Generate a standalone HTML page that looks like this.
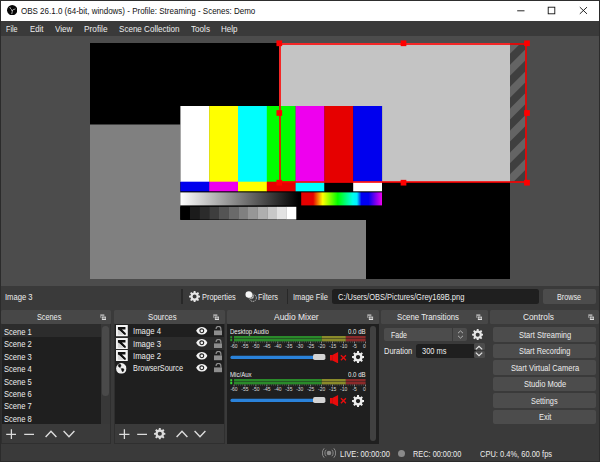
<!DOCTYPE html>
<html><head><meta charset="utf-8"><title>OBS</title>
<style>
html,body{margin:0;padding:0;background:#3a3a3a;}
body{width:600px;height:462px;overflow:hidden;font-family:"Liberation Sans",sans-serif;}
#root{position:relative;width:600px;height:462px;overflow:hidden;background:#3a3a3a;}
#root div,#root svg,#root span{position:absolute;}
.t{white-space:nowrap;transform-origin:0 50%;line-height:14px;height:14px;}
.hdr{background:#474747;border-radius:1.5px;height:14.2px;top:309.7px;}
.list{background:#1f1f1f;}
.btn{background:#4c4c4c;border-radius:2px;}
.sel{background:#2c2c2c;}

</style></head>
<body>
<div id="root">
<svg width="0" height="0" style="left:0;top:0"><defs>
<symbol id="gear" viewBox="-6 -6 12 12"><path fill-rule="evenodd" d="M4.37,-1.08 L5.93,-0.94 L5.93,0.94 L4.37,1.08 L3.86,2.32 L4.85,3.53 L3.53,4.85 L2.32,3.86 L1.08,4.37 L0.94,5.93 L-0.94,5.93 L-1.08,4.37 L-2.32,3.86 L-3.53,4.85 L-4.85,3.53 L-3.86,2.32 L-4.37,1.08 L-5.93,0.94 L-5.93,-0.94 L-4.37,-1.08 L-3.86,-2.32 L-4.85,-3.53 L-3.53,-4.85 L-2.32,-3.86 L-1.08,-4.37 L-0.94,-5.93 L0.94,-5.93 L1.08,-4.37 L2.32,-3.86 L3.53,-4.85 L4.85,-3.53 L3.86,-2.32Z M2.15,0 A2.15,2.15 0 1,0 -2.15,0 A2.15,2.15 0 1,0 2.15,0Z"/></symbol>
<symbol id="eye" viewBox="0 0 12 8"><path d="M0.1,4 C2,0.6 4,0 6,0 C8,0 10,0.6 11.9,4 C10,7.4 8,8 6,8 C4,8 2,7.4 0.1,4Z" fill="#f2f2f2"/><circle cx="6" cy="4" r="2.6" fill="#222"/><circle cx="6" cy="4" r="1.4" fill="#f2f2f2"/></symbol>
<symbol id="lock" viewBox="0 0 9 10"><rect x="0" y="4.6" width="8.6" height="5.2" fill="#8e8e8e"/><path d="M2.2,3.0 V2.9 A2.5,2.5 0 0 1 7.2,2.9 V4.8" fill="none" stroke="#8e8e8e" stroke-width="1.3"/></symbol>
<symbol id="img" viewBox="0 0 11.8 11.4"><rect x="0" y="0" width="11.8" height="11.4" fill="#f4f4f4"/><path d="M1.9,2 H9.4 V4.5 H5.9 L9.7,8.3 V9.7 H8.2 L2.7,4.7 H1.9Z" fill="#101010"/><path d="M1.9,5 L2.5,5 L7.7,9.7 H1.9Z" fill="#d6d6d6"/></symbol>
<symbol id="globe" viewBox="0 0 10.6 10.8"><ellipse cx="5.3" cy="5.4" rx="5.2" ry="5.3" fill="#efefef"/><path d="M2.6,1.6 C3.6,0.9 5.2,1.4 5,2.6 C4.9,3.6 4.2,4.4 3.4,4.2 C2.4,4 2,2.4 2.6,1.6Z M5.6,5.8 C6.6,5.2 8.2,5.8 8,7 C7.8,7.8 7,8.0 6.8,9 C6.2,8.4 5.2,6.8 5.6,5.8Z M3.6,4 L6,6.2" fill="#111" stroke="#111" stroke-width="0.5"/></symbol>
<symbol id="float" viewBox="0 0 7 7"><rect x="0.3" y="0.3" width="4.4" height="3.8" fill="#a8a8a8"/><rect x="1.9" y="2.5" width="4.8" height="4.2" fill="#e2e2e2" stroke="#454545" stroke-width="0.5"/><rect x="2.7" y="3.9" width="3.2" height="1.1" fill="#4a4a4a"/></symbol>
<symbol id="plus" viewBox="0 0 11 11"><path d="M5.5,0.2 V10.8 M0.2,5.5 H10.8" stroke="#dcdcdc" stroke-width="1.3" fill="none"/></symbol>
<symbol id="minus" viewBox="0 0 11 11"><path d="M0.2,5.5 H10.8" stroke="#dcdcdc" stroke-width="1.3" fill="none"/></symbol>
<symbol id="up" viewBox="0 0 12 8"><path d="M0.6,7 L6,1.2 L11.4,7" stroke="#dcdcdc" stroke-width="1.4" fill="none"/></symbol>
<symbol id="down" viewBox="0 0 12 8"><path d="M0.6,1 L6,6.8 L11.4,1" stroke="#dcdcdc" stroke-width="1.4" fill="none"/></symbol>
<symbol id="mute" viewBox="0 0 16.6 11.4"><path d="M0,3.0 H2.4 L8.1,0 V11.4 L2.4,8.5 H0Z" fill="#e80c0c"/><path d="M2.4,3.2 V8.3" stroke="#b00808" stroke-width="0.4"/><path d="M10.9,3.2 L16,8.3 M16,3.2 L10.9,8.3" stroke="#e80c0c" stroke-width="1.4" fill="none"/></symbol>
</defs></svg>
<div style="left:0;top:0;width:600px;height:22px;background:#2e2e2e"></div>
<div style="left:1px;top:1px;width:599px;height:20.4px;background:#fff"></div>
<svg style="left:6.6px;top:4.9px" width="10.4" height="10.4" viewBox="-5.2 -5.2 10.4 10.4"><circle r="5.15" fill="#060606"/>
<g fill="none" stroke="#e8e8e8" stroke-width="0.75" stroke-linecap="round"><path d="M0,0.2 C-0.6,-1.2 -2.0,-1.2 -2.3,-2.7"/><path d="M0,0.2 C0.8,-1.1 1.9,-0.4 2.9,-1.1"/><path d="M0,0.2 C0.6,1.5 -0.4,2.2 -0.4,3.4"/></g></svg>
<svg style="left:510px;top:1px" width="90" height="20" viewBox="510 1 90 20"><g stroke="#111" stroke-width="0.9" fill="none">
<path d="M517.2,10.8 H524.5"/><rect x="548.2" y="7.2" width="6.6" height="6.6"/><path d="M579.8,7.1 L587,13.9 M587,7.1 L579.8,13.9"/></g></svg>
<div style="left:0;top:21.4px;width:600px;height:14.6px;background:#3a3a3a"></div>
<div style="left:0;top:36px;width:600px;height:250px;background:#4c4c4c"></div>
<svg style="left:0;top:36px" width="600" height="250" viewBox="0 36 600 250">
<defs><linearGradient id="gg" x1="0" x2="1"><stop offset="0" stop-color="#fff"/><stop offset="0.04" stop-color="#f4f4f4"/><stop offset="1" stop-color="#000"/></linearGradient>
<linearGradient id="rb" x1="0" x2="1"><stop offset="0" stop-color="#e60000"/><stop offset="0.148" stop-color="#e60000"/><stop offset="0.266" stop-color="#ffff00"/><stop offset="0.453" stop-color="#00ff00"/><stop offset="0.64" stop-color="#00ffee"/><stop offset="0.69" stop-color="#00f0ff"/><stop offset="0.745" stop-color="#0000f0"/><stop offset="0.835" stop-color="#0000f0"/><stop offset="1" stop-color="#ee00ee"/></linearGradient>
<clipPath id="sc"><rect x="510" y="45" width="15.2" height="136"/></clipPath></defs>
<rect x="90" y="43" width="420" height="236" fill="#000"/>
<rect x="90" y="124.5" width="276" height="154.5" fill="#808080"/>
<rect x="279" y="43" width="231" height="139" fill="#c4c4c4"/>
<rect x="510" y="43" width="17" height="139" fill="#3f3f3f"/>
<g clip-path="url(#sc)" fill="#646464">
<polygon points="508,1.1 529,-19.9 529,-8.95 508,12.05"/>
<polygon points="508,23 529,2 529,12.95 508,33.95"/>
<polygon points="508,44.9 529,23.9 529,34.85 508,55.85"/>
<polygon points="508,66.8 529,45.8 529,56.75 508,77.75"/>
<polygon points="508,88.7 529,67.7 529,78.65 508,99.65"/>
<polygon points="508,110.6 529,89.6 529,100.55 508,121.55"/>
<polygon points="508,132.5 529,111.5 529,122.45 508,143.45"/>
<polygon points="508,154.4 529,133.4 529,144.35 508,165.35"/>
<polygon points="508,176.3 529,155.3 529,166.25 508,187.25"/>
<polygon points="508,198.2 529,177.2 529,188.15 508,209.15"/>
</g>
<rect x="180.3" y="106" width="201.8" height="114" fill="#000"/>
<rect x="180.40" y="106" width="29.00" height="76" fill="#ffffff"/>
<rect x="209.20" y="106" width="29.00" height="76" fill="#ffff00"/>
<rect x="238.00" y="106" width="29.00" height="76" fill="#00ffff"/>
<rect x="266.80" y="106" width="29.00" height="76" fill="#00ff00"/>
<rect x="295.60" y="106" width="29.00" height="76" fill="#ee00ee"/>
<rect x="324.40" y="106" width="29.00" height="76" fill="#e60000"/>
<rect x="353.20" y="106" width="28.80" height="76" fill="#0000ee"/>
<rect x="180.40" y="181.7" width="29.00" height="9.6" fill="#0000ee"/>
<rect x="209.20" y="181.7" width="29.00" height="9.6" fill="#ee00ee"/>
<rect x="238.00" y="181.7" width="29.00" height="9.6" fill="#ffff00"/>
<rect x="266.80" y="181.7" width="29.00" height="9.6" fill="#e60000"/>
<rect x="295.60" y="181.7" width="29.00" height="9.6" fill="#00ffff"/>
<rect x="324.40" y="181.7" width="29.00" height="9.6" fill="#000000"/>
<rect x="353.20" y="181.7" width="28.80" height="9.6" fill="#ffffff"/>
<rect x="180.3" y="192.4" width="118" height="13.0" fill="url(#gg)"/>
<rect x="301.2" y="192.4" width="80.8" height="13.0" fill="url(#rb)"/>
<rect x="180.30" y="206.8" width="9.87" height="12.7" fill="rgb(0,0,0)"/>
<rect x="189.97" y="206.8" width="9.87" height="12.7" fill="rgb(27,27,27)"/>
<rect x="199.63" y="206.8" width="9.87" height="12.7" fill="rgb(43,43,43)"/>
<rect x="209.30" y="206.8" width="9.87" height="12.7" fill="rgb(62,62,62)"/>
<rect x="218.97" y="206.8" width="9.87" height="12.7" fill="rgb(84,84,84)"/>
<rect x="228.63" y="206.8" width="9.87" height="12.7" fill="rgb(106,106,106)"/>
<rect x="238.30" y="206.8" width="9.87" height="12.7" fill="rgb(128,128,128)"/>
<rect x="247.97" y="206.8" width="9.87" height="12.7" fill="rgb(151,151,151)"/>
<rect x="257.63" y="206.8" width="9.87" height="12.7" fill="rgb(175,175,175)"/>
<rect x="267.30" y="206.8" width="9.87" height="12.7" fill="rgb(200,200,200)"/>
<rect x="276.97" y="206.8" width="9.87" height="12.7" fill="rgb(226,226,226)"/>
<rect x="286.63" y="206.8" width="9.67" height="12.7" fill="rgb(255,255,255)"/>
<rect x="280" y="44" width="246" height="138" fill="none" stroke="#ff0000" stroke-width="1.6"/>
<rect x="276.45" y="40.45" width="5.7" height="5.7" fill="#ff0000"/>
<rect x="276.45" y="110.15" width="5.7" height="5.7" fill="#ff0000"/>
<rect x="276.45" y="179.85" width="5.7" height="5.7" fill="#ff0000"/>
<rect x="400.65" y="40.45" width="5.7" height="5.7" fill="#ff0000"/>
<rect x="400.65" y="179.85" width="5.7" height="5.7" fill="#ff0000"/>
<rect x="524.15" y="40.45" width="5.7" height="5.7" fill="#ff0000"/>
<rect x="524.15" y="110.15" width="5.7" height="5.7" fill="#ff0000"/>
<rect x="524.15" y="179.85" width="5.7" height="5.7" fill="#ff0000"/>
</svg>
<div style="left:0;top:286px;width:600px;height:24px;background:#3a3a3a"></div>
<div style="left:181.2px;top:288.5px;width:1.6px;height:15px;background:#282828"></div>
<div style="left:286.6px;top:288.5px;width:1.6px;height:15px;background:#282828"></div>
<svg style="left:189.4px;top:291px" width="11.2" height="11.2" fill="#e6e6e6"><use href="#gear"/></svg>
<svg style="left:244.8px;top:290.4px" width="12.4" height="12" viewBox="0 0 12.4 12"><defs><clipPath id="fc"><circle cx="5.7" cy="6.0" r="3.3"/></clipPath></defs>
<circle cx="7.9" cy="7.9" r="3.5" fill="none" stroke="#cfcfcf" stroke-width="0.9" stroke-dasharray="1.3 0.7"/>
<circle cx="5.7" cy="6.0" r="3.4" fill="#3a3a3a"/>
<g clip-path="url(#fc)" stroke="#ececec" stroke-width="0.7"><path d="M2,7.4 L7,2.4 M2.8,8.6 L8.2,3.2 M4,9.6 L9.2,4.4 M5.2,10.6 L10.2,5.6"/><path d="M3.2,3.2 L8.6,8.6 M2,4.4 L7.4,9.8 M4.6,2.2 L9.8,7.4"/></g>
<circle cx="3.8" cy="4.5" r="3.3" fill="#f6f6f6"/></svg>
<div class="list" style="left:332px;top:289px;width:206.6px;height:14.6px;border-radius:2.5px"></div>
<div class="btn" style="left:543px;top:289px;width:52.6px;height:14.6px"></div>
<div class="hdr" style="left:1px;width:110px"></div>
<svg style="left:99.7px;top:313.6px" width="6.5" height="6.5"><use href="#float"/></svg>
<div class="hdr" style="left:114px;width:110.5px"></div>
<svg style="left:212.9px;top:313.6px" width="6.5" height="6.5"><use href="#float"/></svg>
<div class="hdr" style="left:227px;width:152px"></div>
<svg style="left:367.2px;top:313.6px" width="6.5" height="6.5"><use href="#float"/></svg>
<div class="hdr" style="left:381px;width:107px"></div>
<svg style="left:475.9px;top:313.6px" width="6.5" height="6.5"><use href="#float"/></svg>
<div class="hdr" style="left:490px;width:109px"></div>
<svg style="left:587.9px;top:313.6px" width="6.5" height="6.5"><use href="#float"/></svg>
<div class="list" style="left:1px;top:324px;width:109.8px;height:100.4px"></div>
<div class="sel" style="left:1px;top:324px;width:99.5px;height:13px"></div>
<div style="left:100.6px;top:324px;width:9.2px;height:100.4px;background:#383838"></div>
<div style="left:109.8px;top:324px;width:1.2px;height:100.4px;background:#2a2a2a"></div>
<div style="left:102px;top:326px;width:7.3px;height:69.7px;background:#4a4a4a;border-radius:3.6px"></div>
<svg style="left:5.6px;top:428.6px" width="10.8" height="10.8"><use href="#plus"/></svg>
<svg style="left:23.6px;top:428.6px" width="10.8" height="10.8"><use href="#minus"/></svg>
<svg style="left:45px;top:430px" width="12" height="8"><use href="#up"/></svg>
<svg style="left:63px;top:430px" width="12" height="8"><use href="#down"/></svg>
<div class="list" style="left:114px;top:324px;width:110.5px;height:100.4px"></div>
<div class="sel" style="left:114px;top:337.2px;width:110.5px;height:12.4px"></div>
<svg style="left:116.2px;top:325.1px" width="11.9" height="11.5"><use href="#img"/></svg>
<svg style="left:196.3px;top:327.05px" width="11.6" height="7.7"><use href="#eye"/></svg>
<svg style="left:213.6px;top:326.1px" width="8.6" height="9.6"><use href="#lock"/></svg>
<svg style="left:116.2px;top:337.53px" width="11.9" height="11.5"><use href="#img"/></svg>
<svg style="left:196.3px;top:339.48px" width="11.6" height="7.7"><use href="#eye"/></svg>
<svg style="left:213.6px;top:338.53px" width="8.6" height="9.6"><use href="#lock"/></svg>
<svg style="left:116.2px;top:349.96px" width="11.9" height="11.5"><use href="#img"/></svg>
<svg style="left:196.3px;top:351.91px" width="11.6" height="7.7"><use href="#eye"/></svg>
<svg style="left:213.6px;top:350.96px" width="8.6" height="9.6"><use href="#lock"/></svg>
<svg style="left:116.3px;top:362.89px" width="10.6" height="10.8"><use href="#globe"/></svg>
<svg style="left:196.3px;top:364.34px" width="11.6" height="7.7"><use href="#eye"/></svg>
<svg style="left:213.6px;top:363.39px" width="8.6" height="9.6"><use href="#lock"/></svg>
<svg style="left:119px;top:428.6px" width="10.8" height="10.8"><use href="#plus"/></svg>
<svg style="left:136.6px;top:428.6px" width="10.8" height="10.8"><use href="#minus"/></svg>
<svg style="left:154.4px;top:428.3px" width="11.6" height="11.6" fill="#dcdcdc"><use href="#gear"/></svg>
<svg style="left:176.4px;top:430px" width="12" height="8"><use href="#up"/></svg>
<svg style="left:194.4px;top:430px" width="12" height="8"><use href="#down"/></svg>
<div class="list" style="left:227px;top:324px;width:152px;height:119.8px"></div>
<div style="left:369.7px;top:325.8px;width:6.6px;height:115.4px;background:#414141;border-radius:3.3px"></div>
<svg style="left:228px;top:333px" width="142" height="32" viewBox="228 333 142 32">
<rect x="230.3" y="336.2" width="1.9" height="2.2" fill="#2a962a"/><rect x="230.3" y="339" width="1.9" height="2.2" fill="#2a962a"/>
<rect x="234.00" y="336" width="87.73" height="2.5" fill="#2a8a2a"/>
<rect x="234.00" y="338.9" width="87.73" height="2.5" fill="#2a8a2a"/>
<rect x="321.73" y="336" width="24.13" height="2.5" fill="#8a8a2a"/>
<rect x="321.73" y="338.9" width="24.13" height="2.5" fill="#8a8a2a"/>
<rect x="345.86" y="336" width="19.74" height="2.5" fill="#8a2a2a"/>
<rect x="345.86" y="338.9" width="19.74" height="2.5" fill="#8a2a2a"/>
<rect x="233.73" y="341.6" width="0.55" height="1.8" fill="#d8d8d8"/>
<rect x="235.92" y="341.6" width="0.55" height="0.9" fill="#8a8a8a"/>
<rect x="238.12" y="341.6" width="0.55" height="0.9" fill="#8a8a8a"/>
<rect x="240.31" y="341.6" width="0.55" height="0.9" fill="#8a8a8a"/>
<rect x="242.50" y="341.6" width="0.55" height="0.9" fill="#8a8a8a"/>
<rect x="244.70" y="341.6" width="0.55" height="1.8" fill="#d8d8d8"/>
<rect x="246.89" y="341.6" width="0.55" height="0.9" fill="#8a8a8a"/>
<rect x="249.08" y="341.6" width="0.55" height="0.9" fill="#8a8a8a"/>
<rect x="251.28" y="341.6" width="0.55" height="0.9" fill="#8a8a8a"/>
<rect x="253.47" y="341.6" width="0.55" height="0.9" fill="#8a8a8a"/>
<rect x="255.66" y="341.6" width="0.55" height="1.8" fill="#d8d8d8"/>
<rect x="257.86" y="341.6" width="0.55" height="0.9" fill="#8a8a8a"/>
<rect x="260.05" y="341.6" width="0.55" height="0.9" fill="#8a8a8a"/>
<rect x="262.24" y="341.6" width="0.55" height="0.9" fill="#8a8a8a"/>
<rect x="264.44" y="341.6" width="0.55" height="0.9" fill="#8a8a8a"/>
<rect x="266.63" y="341.6" width="0.55" height="1.8" fill="#d8d8d8"/>
<rect x="268.82" y="341.6" width="0.55" height="0.9" fill="#8a8a8a"/>
<rect x="271.02" y="341.6" width="0.55" height="0.9" fill="#8a8a8a"/>
<rect x="273.21" y="341.6" width="0.55" height="0.9" fill="#8a8a8a"/>
<rect x="275.40" y="341.6" width="0.55" height="0.9" fill="#8a8a8a"/>
<rect x="277.60" y="341.6" width="0.55" height="1.8" fill="#d8d8d8"/>
<rect x="279.79" y="341.6" width="0.55" height="0.9" fill="#8a8a8a"/>
<rect x="281.98" y="341.6" width="0.55" height="0.9" fill="#8a8a8a"/>
<rect x="284.18" y="341.6" width="0.55" height="0.9" fill="#8a8a8a"/>
<rect x="286.37" y="341.6" width="0.55" height="0.9" fill="#8a8a8a"/>
<rect x="288.56" y="341.6" width="0.55" height="1.8" fill="#d8d8d8"/>
<rect x="290.76" y="341.6" width="0.55" height="0.9" fill="#8a8a8a"/>
<rect x="292.95" y="341.6" width="0.55" height="0.9" fill="#8a8a8a"/>
<rect x="295.14" y="341.6" width="0.55" height="0.9" fill="#8a8a8a"/>
<rect x="297.34" y="341.6" width="0.55" height="0.9" fill="#8a8a8a"/>
<rect x="299.53" y="341.6" width="0.55" height="1.8" fill="#d8d8d8"/>
<rect x="301.72" y="341.6" width="0.55" height="0.9" fill="#8a8a8a"/>
<rect x="303.92" y="341.6" width="0.55" height="0.9" fill="#8a8a8a"/>
<rect x="306.11" y="341.6" width="0.55" height="0.9" fill="#8a8a8a"/>
<rect x="308.30" y="341.6" width="0.55" height="0.9" fill="#8a8a8a"/>
<rect x="310.50" y="341.6" width="0.55" height="1.8" fill="#d8d8d8"/>
<rect x="312.69" y="341.6" width="0.55" height="0.9" fill="#8a8a8a"/>
<rect x="314.88" y="341.6" width="0.55" height="0.9" fill="#8a8a8a"/>
<rect x="317.08" y="341.6" width="0.55" height="0.9" fill="#8a8a8a"/>
<rect x="319.27" y="341.6" width="0.55" height="0.9" fill="#8a8a8a"/>
<rect x="321.46" y="341.6" width="0.55" height="1.8" fill="#d8d8d8"/>
<rect x="323.66" y="341.6" width="0.55" height="0.9" fill="#8a8a8a"/>
<rect x="325.85" y="341.6" width="0.55" height="0.9" fill="#8a8a8a"/>
<rect x="328.04" y="341.6" width="0.55" height="0.9" fill="#8a8a8a"/>
<rect x="330.24" y="341.6" width="0.55" height="0.9" fill="#8a8a8a"/>
<rect x="332.43" y="341.6" width="0.55" height="1.8" fill="#d8d8d8"/>
<rect x="334.62" y="341.6" width="0.55" height="0.9" fill="#8a8a8a"/>
<rect x="336.82" y="341.6" width="0.55" height="0.9" fill="#8a8a8a"/>
<rect x="339.01" y="341.6" width="0.55" height="0.9" fill="#8a8a8a"/>
<rect x="341.20" y="341.6" width="0.55" height="0.9" fill="#8a8a8a"/>
<rect x="343.40" y="341.6" width="0.55" height="1.8" fill="#d8d8d8"/>
<rect x="345.59" y="341.6" width="0.55" height="0.9" fill="#8a8a8a"/>
<rect x="347.78" y="341.6" width="0.55" height="0.9" fill="#8a8a8a"/>
<rect x="349.98" y="341.6" width="0.55" height="0.9" fill="#8a8a8a"/>
<rect x="352.17" y="341.6" width="0.55" height="0.9" fill="#8a8a8a"/>
<rect x="354.36" y="341.6" width="0.55" height="1.8" fill="#d8d8d8"/>
<rect x="356.56" y="341.6" width="0.55" height="0.9" fill="#8a8a8a"/>
<rect x="358.75" y="341.6" width="0.55" height="0.9" fill="#8a8a8a"/>
<rect x="360.94" y="341.6" width="0.55" height="0.9" fill="#8a8a8a"/>
<rect x="363.14" y="341.6" width="0.55" height="0.9" fill="#8a8a8a"/>
<rect x="365.33" y="341.6" width="0.55" height="1.8" fill="#d8d8d8"/>
<text x="234.00" y="348.0" font-size="5" fill="#dadada" text-anchor="middle" font-family="Liberation Sans, sans-serif">-60</text>
<text x="244.97" y="348.0" font-size="5" fill="#dadada" text-anchor="middle" font-family="Liberation Sans, sans-serif">-55</text>
<text x="255.93" y="348.0" font-size="5" fill="#dadada" text-anchor="middle" font-family="Liberation Sans, sans-serif">-50</text>
<text x="266.90" y="348.0" font-size="5" fill="#dadada" text-anchor="middle" font-family="Liberation Sans, sans-serif">-45</text>
<text x="277.87" y="348.0" font-size="5" fill="#dadada" text-anchor="middle" font-family="Liberation Sans, sans-serif">-40</text>
<text x="288.83" y="348.0" font-size="5" fill="#dadada" text-anchor="middle" font-family="Liberation Sans, sans-serif">-35</text>
<text x="299.80" y="348.0" font-size="5" fill="#dadada" text-anchor="middle" font-family="Liberation Sans, sans-serif">-30</text>
<text x="310.77" y="348.0" font-size="5" fill="#dadada" text-anchor="middle" font-family="Liberation Sans, sans-serif">-25</text>
<text x="321.73" y="348.0" font-size="5" fill="#dadada" text-anchor="middle" font-family="Liberation Sans, sans-serif">-20</text>
<text x="332.70" y="348.0" font-size="5" fill="#dadada" text-anchor="middle" font-family="Liberation Sans, sans-serif">-15</text>
<text x="343.67" y="348.0" font-size="5" fill="#dadada" text-anchor="middle" font-family="Liberation Sans, sans-serif">-10</text>
<text x="354.63" y="348.0" font-size="5" fill="#dadada" text-anchor="middle" font-family="Liberation Sans, sans-serif">-5</text>
<text x="365.80" y="348.0" font-size="5" fill="#dadada" text-anchor="end" font-family="Liberation Sans, sans-serif">0</text>
<rect x="230.4" y="355.8" width="84" height="3.2" rx="1.6" fill="#2a82da"/>
<rect x="313" y="354.1" width="12.4" height="6" rx="1.8" fill="#d4d4d4"/>
</svg>
<svg style="left:330px;top:351.5px" width="16.6" height="11.4"><use href="#mute"/></svg>
<svg style="left:352.1px;top:351.35px" width="12.1" height="12.1" fill="#ececec"><use href="#gear"/></svg>
<svg style="left:228px;top:376.3px" width="142" height="32" viewBox="228 333 142 32">
<rect x="230.3" y="336.2" width="1.9" height="2.2" fill="#36dc36"/><rect x="230.3" y="339" width="1.9" height="2.2" fill="#36dc36"/>
<rect x="234.00" y="336" width="87.73" height="2.5" fill="#2a8a2a"/>
<rect x="234.00" y="338.9" width="87.73" height="2.5" fill="#2a8a2a"/>
<rect x="321.73" y="336" width="24.13" height="2.5" fill="#8a8a2a"/>
<rect x="321.73" y="338.9" width="24.13" height="2.5" fill="#8a8a2a"/>
<rect x="345.86" y="336" width="19.74" height="2.5" fill="#8a2a2a"/>
<rect x="345.86" y="338.9" width="19.74" height="2.5" fill="#8a2a2a"/>
<rect x="233.73" y="341.6" width="0.55" height="1.8" fill="#d8d8d8"/>
<rect x="235.92" y="341.6" width="0.55" height="0.9" fill="#8a8a8a"/>
<rect x="238.12" y="341.6" width="0.55" height="0.9" fill="#8a8a8a"/>
<rect x="240.31" y="341.6" width="0.55" height="0.9" fill="#8a8a8a"/>
<rect x="242.50" y="341.6" width="0.55" height="0.9" fill="#8a8a8a"/>
<rect x="244.70" y="341.6" width="0.55" height="1.8" fill="#d8d8d8"/>
<rect x="246.89" y="341.6" width="0.55" height="0.9" fill="#8a8a8a"/>
<rect x="249.08" y="341.6" width="0.55" height="0.9" fill="#8a8a8a"/>
<rect x="251.28" y="341.6" width="0.55" height="0.9" fill="#8a8a8a"/>
<rect x="253.47" y="341.6" width="0.55" height="0.9" fill="#8a8a8a"/>
<rect x="255.66" y="341.6" width="0.55" height="1.8" fill="#d8d8d8"/>
<rect x="257.86" y="341.6" width="0.55" height="0.9" fill="#8a8a8a"/>
<rect x="260.05" y="341.6" width="0.55" height="0.9" fill="#8a8a8a"/>
<rect x="262.24" y="341.6" width="0.55" height="0.9" fill="#8a8a8a"/>
<rect x="264.44" y="341.6" width="0.55" height="0.9" fill="#8a8a8a"/>
<rect x="266.63" y="341.6" width="0.55" height="1.8" fill="#d8d8d8"/>
<rect x="268.82" y="341.6" width="0.55" height="0.9" fill="#8a8a8a"/>
<rect x="271.02" y="341.6" width="0.55" height="0.9" fill="#8a8a8a"/>
<rect x="273.21" y="341.6" width="0.55" height="0.9" fill="#8a8a8a"/>
<rect x="275.40" y="341.6" width="0.55" height="0.9" fill="#8a8a8a"/>
<rect x="277.60" y="341.6" width="0.55" height="1.8" fill="#d8d8d8"/>
<rect x="279.79" y="341.6" width="0.55" height="0.9" fill="#8a8a8a"/>
<rect x="281.98" y="341.6" width="0.55" height="0.9" fill="#8a8a8a"/>
<rect x="284.18" y="341.6" width="0.55" height="0.9" fill="#8a8a8a"/>
<rect x="286.37" y="341.6" width="0.55" height="0.9" fill="#8a8a8a"/>
<rect x="288.56" y="341.6" width="0.55" height="1.8" fill="#d8d8d8"/>
<rect x="290.76" y="341.6" width="0.55" height="0.9" fill="#8a8a8a"/>
<rect x="292.95" y="341.6" width="0.55" height="0.9" fill="#8a8a8a"/>
<rect x="295.14" y="341.6" width="0.55" height="0.9" fill="#8a8a8a"/>
<rect x="297.34" y="341.6" width="0.55" height="0.9" fill="#8a8a8a"/>
<rect x="299.53" y="341.6" width="0.55" height="1.8" fill="#d8d8d8"/>
<rect x="301.72" y="341.6" width="0.55" height="0.9" fill="#8a8a8a"/>
<rect x="303.92" y="341.6" width="0.55" height="0.9" fill="#8a8a8a"/>
<rect x="306.11" y="341.6" width="0.55" height="0.9" fill="#8a8a8a"/>
<rect x="308.30" y="341.6" width="0.55" height="0.9" fill="#8a8a8a"/>
<rect x="310.50" y="341.6" width="0.55" height="1.8" fill="#d8d8d8"/>
<rect x="312.69" y="341.6" width="0.55" height="0.9" fill="#8a8a8a"/>
<rect x="314.88" y="341.6" width="0.55" height="0.9" fill="#8a8a8a"/>
<rect x="317.08" y="341.6" width="0.55" height="0.9" fill="#8a8a8a"/>
<rect x="319.27" y="341.6" width="0.55" height="0.9" fill="#8a8a8a"/>
<rect x="321.46" y="341.6" width="0.55" height="1.8" fill="#d8d8d8"/>
<rect x="323.66" y="341.6" width="0.55" height="0.9" fill="#8a8a8a"/>
<rect x="325.85" y="341.6" width="0.55" height="0.9" fill="#8a8a8a"/>
<rect x="328.04" y="341.6" width="0.55" height="0.9" fill="#8a8a8a"/>
<rect x="330.24" y="341.6" width="0.55" height="0.9" fill="#8a8a8a"/>
<rect x="332.43" y="341.6" width="0.55" height="1.8" fill="#d8d8d8"/>
<rect x="334.62" y="341.6" width="0.55" height="0.9" fill="#8a8a8a"/>
<rect x="336.82" y="341.6" width="0.55" height="0.9" fill="#8a8a8a"/>
<rect x="339.01" y="341.6" width="0.55" height="0.9" fill="#8a8a8a"/>
<rect x="341.20" y="341.6" width="0.55" height="0.9" fill="#8a8a8a"/>
<rect x="343.40" y="341.6" width="0.55" height="1.8" fill="#d8d8d8"/>
<rect x="345.59" y="341.6" width="0.55" height="0.9" fill="#8a8a8a"/>
<rect x="347.78" y="341.6" width="0.55" height="0.9" fill="#8a8a8a"/>
<rect x="349.98" y="341.6" width="0.55" height="0.9" fill="#8a8a8a"/>
<rect x="352.17" y="341.6" width="0.55" height="0.9" fill="#8a8a8a"/>
<rect x="354.36" y="341.6" width="0.55" height="1.8" fill="#d8d8d8"/>
<rect x="356.56" y="341.6" width="0.55" height="0.9" fill="#8a8a8a"/>
<rect x="358.75" y="341.6" width="0.55" height="0.9" fill="#8a8a8a"/>
<rect x="360.94" y="341.6" width="0.55" height="0.9" fill="#8a8a8a"/>
<rect x="363.14" y="341.6" width="0.55" height="0.9" fill="#8a8a8a"/>
<rect x="365.33" y="341.6" width="0.55" height="1.8" fill="#d8d8d8"/>
<text x="234.00" y="348.0" font-size="5" fill="#dadada" text-anchor="middle" font-family="Liberation Sans, sans-serif">-60</text>
<text x="244.97" y="348.0" font-size="5" fill="#dadada" text-anchor="middle" font-family="Liberation Sans, sans-serif">-55</text>
<text x="255.93" y="348.0" font-size="5" fill="#dadada" text-anchor="middle" font-family="Liberation Sans, sans-serif">-50</text>
<text x="266.90" y="348.0" font-size="5" fill="#dadada" text-anchor="middle" font-family="Liberation Sans, sans-serif">-45</text>
<text x="277.87" y="348.0" font-size="5" fill="#dadada" text-anchor="middle" font-family="Liberation Sans, sans-serif">-40</text>
<text x="288.83" y="348.0" font-size="5" fill="#dadada" text-anchor="middle" font-family="Liberation Sans, sans-serif">-35</text>
<text x="299.80" y="348.0" font-size="5" fill="#dadada" text-anchor="middle" font-family="Liberation Sans, sans-serif">-30</text>
<text x="310.77" y="348.0" font-size="5" fill="#dadada" text-anchor="middle" font-family="Liberation Sans, sans-serif">-25</text>
<text x="321.73" y="348.0" font-size="5" fill="#dadada" text-anchor="middle" font-family="Liberation Sans, sans-serif">-20</text>
<text x="332.70" y="348.0" font-size="5" fill="#dadada" text-anchor="middle" font-family="Liberation Sans, sans-serif">-15</text>
<text x="343.67" y="348.0" font-size="5" fill="#dadada" text-anchor="middle" font-family="Liberation Sans, sans-serif">-10</text>
<text x="354.63" y="348.0" font-size="5" fill="#dadada" text-anchor="middle" font-family="Liberation Sans, sans-serif">-5</text>
<text x="365.80" y="348.0" font-size="5" fill="#dadada" text-anchor="end" font-family="Liberation Sans, sans-serif">0</text>
<rect x="230.4" y="355.8" width="84" height="3.2" rx="1.6" fill="#2a82da"/>
<rect x="313" y="354.1" width="12.4" height="6" rx="1.8" fill="#d4d4d4"/>
</svg>
<svg style="left:330px;top:394.8px" width="16.6" height="11.4"><use href="#mute"/></svg>
<svg style="left:352.1px;top:394.65px" width="12.1" height="12.1" fill="#ececec"><use href="#gear"/></svg>
<div class="btn" style="left:384.4px;top:328px;width:82.6px;height:13.4px"></div>
<div style="left:452.2px;top:328px;width:0.8px;height:13.4px;background:#3a3a3a"></div>
<svg style="left:456.6px;top:330.2px" width="7" height="9" viewBox="0 0 7 9"><path d="M1,3.2 L3.5,0.9 L6,3.2 M1,5.8 L3.5,8.1 L6,5.8" stroke="#bdbdbd" stroke-width="0.9" fill="none"/></svg>
<svg style="left:471.6px;top:328.9px" width="11.4" height="11.4" fill="#e6e6e6"><use href="#gear"/></svg>
<div class="list" style="left:416px;top:343.6px;width:60px;height:14px;border-radius:2.5px"></div>
<div class="btn" style="left:474.1px;top:343.4px;width:10.5px;height:6.7px;border-radius:1.5px"></div>
<div class="btn" style="left:474.1px;top:350.7px;width:10.5px;height:7px;border-radius:1.5px"></div>
<svg style="left:475.4px;top:344.6px" width="8" height="12" viewBox="0 0 8 12"><path d="M0.8,4.4 L4,1.4 L7.2,4.4 M0.8,7.6 L4,10.6 L7.2,7.6" stroke="#e4e4e4" stroke-width="1.25" fill="none"/></svg>
<div class="btn" style="left:493px;top:327.3px;width:103px;height:14.5px"></div>
<div class="btn" style="left:493px;top:343.8px;width:103px;height:14.5px"></div>
<div class="btn" style="left:493px;top:360.3px;width:103px;height:14.5px"></div>
<div class="btn" style="left:493px;top:376.8px;width:103px;height:14.5px"></div>
<div class="btn" style="left:493px;top:393.3px;width:103px;height:14.5px"></div>
<div class="btn" style="left:493px;top:409.8px;width:103px;height:14.5px"></div>
<svg style="left:321.5px;top:447.4px" width="14" height="12" viewBox="0 0 14 12"><circle cx="7" cy="6" r="2.3" fill="#8c8c8c"/><g fill="none" stroke="#8c8c8c" stroke-width="1.0"><path d="M4.2,2.8 A4.5,4.5 0 0 0 4.2,9.2"/><path d="M9.8,2.8 A4.5,4.5 0 0 1 9.8,9.2"/><path d="M2.2,1.3 A6.8,6.8 0 0 0 2.2,10.7"/><path d="M11.8,1.3 A6.8,6.8 0 0 1 11.8,10.7"/></g></svg>
<div style="left:398.2px;top:450px;width:7.2px;height:7.2px;border-radius:50%;background:#8a8a8a"></div>
<div style="left:0.8px;top:324px;width:1px;height:119px;background:#2f2f2f"></div>
<div style="left:110.2px;top:324px;width:1px;height:119px;background:#2f2f2f"></div>
<div style="left:0.8px;top:442.8px;width:110.4px;height:1px;background:#2f2f2f"></div>
<div style="left:113.8px;top:324px;width:1px;height:119px;background:#2f2f2f"></div>
<div style="left:223.7px;top:324px;width:1px;height:119px;background:#2f2f2f"></div>
<div style="left:113.8px;top:442.8px;width:110.9px;height:1px;background:#2f2f2f"></div>
<div style="left:0;top:0;width:1px;height:462px;background:#2b2b2b"></div>
<div style="left:599px;top:0;width:1px;height:462px;background:#2b2b2b"></div>
<div style="left:0;top:461px;width:600px;height:1px;background:#2b2b2b"></div>
<span class="t" style="left:20.70px;top:3.90px;font-size:9.00px;color:#111;transform:scaleX(0.8888);">OBS 26.1.0 (64-bit, windows) - Profile: Streaming - Scenes: Demo</span>
<span class="t" style="left:6.40px;top:21.90px;font-size:9.00px;color:#ededed;transform:scaleX(0.7991);">File</span>
<span class="t" style="left:30.40px;top:21.90px;font-size:9.00px;color:#ededed;transform:scaleX(0.8572);">Edit</span>
<span class="t" style="left:55.30px;top:21.90px;font-size:9.00px;color:#ededed;transform:scaleX(0.8988);">View</span>
<span class="t" style="left:84.00px;top:21.90px;font-size:9.00px;color:#ededed;transform:scaleX(0.9210);">Profile</span>
<span class="t" style="left:118.50px;top:21.90px;font-size:9.00px;color:#ededed;transform:scaleX(0.8957);">Scene Collection</span>
<span class="t" style="left:190.50px;top:21.90px;font-size:9.00px;color:#ededed;transform:scaleX(0.9041);">Tools</span>
<span class="t" style="left:221.00px;top:21.90px;font-size:9.00px;color:#ededed;transform:scaleX(0.8911);">Help</span>
<span class="t" style="left:5.00px;top:290.00px;font-size:9.00px;color:#ededed;transform:scaleX(0.8453);">Image 3</span>
<span class="t" style="left:202.00px;top:290.00px;font-size:9.00px;color:#ededed;transform:scaleX(0.8213);">Properties</span>
<span class="t" style="left:258.00px;top:290.00px;font-size:9.00px;color:#ededed;transform:scaleX(0.8163);">Filters</span>
<span class="t" style="left:292.80px;top:290.00px;font-size:9.00px;color:#ededed;transform:scaleX(0.8303);">Image File</span>
<span class="t" style="left:337.70px;top:290.00px;font-size:9.00px;color:#ededed;transform:scaleX(0.8306);">C:/Users/OBS/Pictures/Grey169B.png</span>
<span class="t" style="left:557.00px;top:290.00px;font-size:9.00px;color:#ededed;transform:scaleX(0.7996);">Browse</span>
<span class="t" style="left:37.00px;top:310.20px;font-size:9.00px;color:#ededed;transform:scaleX(0.8092);">Scenes</span>
<span class="t" style="left:148.00px;top:310.20px;font-size:9.00px;color:#ededed;transform:scaleX(0.8658);">Sources</span>
<span class="t" style="left:274.00px;top:310.20px;font-size:9.00px;color:#ededed;transform:scaleX(0.9404);">Audio Mixer</span>
<span class="t" style="left:397.00px;top:310.20px;font-size:9.00px;color:#ededed;transform:scaleX(0.8666);">Scene Transitions</span>
<span class="t" style="left:522.70px;top:310.20px;font-size:9.00px;color:#ededed;transform:scaleX(0.9220);">Controls</span>
<span class="t" style="left:3.50px;top:324.70px;font-size:9.00px;color:#ededed;transform:scaleX(0.8416);">Scene 1</span>
<span class="t" style="left:3.50px;top:337.15px;font-size:9.00px;color:#ededed;transform:scaleX(0.8416);">Scene 2</span>
<span class="t" style="left:3.50px;top:349.60px;font-size:9.00px;color:#ededed;transform:scaleX(0.8416);">Scene 3</span>
<span class="t" style="left:3.50px;top:362.05px;font-size:9.00px;color:#ededed;transform:scaleX(0.8416);">Scene 4</span>
<span class="t" style="left:3.50px;top:374.50px;font-size:9.00px;color:#ededed;transform:scaleX(0.8416);">Scene 5</span>
<span class="t" style="left:3.50px;top:386.95px;font-size:9.00px;color:#ededed;transform:scaleX(0.8416);">Scene 6</span>
<span class="t" style="left:3.50px;top:399.40px;font-size:9.00px;color:#ededed;transform:scaleX(0.8416);">Scene 7</span>
<span class="t" style="left:3.50px;top:411.85px;font-size:9.00px;color:#ededed;transform:scaleX(0.8416);">Scene 8</span>
<span class="t" style="left:133.00px;top:324.20px;font-size:9.00px;color:#ededed;transform:scaleX(0.8607);">Image 4</span>
<span class="t" style="left:133.00px;top:336.60px;font-size:9.00px;color:#ededed;transform:scaleX(0.8607);">Image 3</span>
<span class="t" style="left:133.00px;top:349.00px;font-size:9.00px;color:#ededed;transform:scaleX(0.8607);">Image 2</span>
<span class="t" style="left:133.00px;top:361.40px;font-size:9.00px;color:#ededed;transform:scaleX(0.8126);">BrowserSource</span>
<span class="t" style="left:230.40px;top:324.90px;font-size:7.60px;color:#ededed;transform:scaleX(0.7941);">Desktop Audio</span>
<span class="t" style="left:348.00px;top:324.90px;font-size:7.60px;color:#ededed;transform:scaleX(0.8011);">0.0 dB</span>
<span class="t" style="left:230.40px;top:368.30px;font-size:7.60px;color:#ededed;transform:scaleX(0.7995);">Mic/Aux</span>
<span class="t" style="left:348.00px;top:368.30px;font-size:7.60px;color:#ededed;transform:scaleX(0.8011);">0.0 dB</span>
<span class="t" style="left:391.00px;top:327.70px;font-size:9.00px;color:#ededed;transform:scaleX(0.7799);">Fade</span>
<span class="t" style="left:384.40px;top:344.20px;font-size:9.00px;color:#ededed;transform:scaleX(0.8287);">Duration</span>
<span class="t" style="left:422.00px;top:344.20px;font-size:9.00px;color:#ededed;transform:scaleX(0.8267);">300 ms</span>
<span class="t" style="left:518.80px;top:327.70px;font-size:9.00px;color:#ededed;transform:scaleX(0.8348);">Start Streaming</span>
<span class="t" style="left:519.20px;top:344.20px;font-size:9.00px;color:#ededed;transform:scaleX(0.8204);">Start Recording</span>
<span class="t" style="left:510.70px;top:360.70px;font-size:9.00px;color:#ededed;transform:scaleX(0.8369);">Start Virtual Camera</span>
<span class="t" style="left:524.00px;top:377.20px;font-size:9.00px;color:#ededed;transform:scaleX(0.8349);">Studio Mode</span>
<span class="t" style="left:531.40px;top:393.70px;font-size:9.00px;color:#ededed;transform:scaleX(0.8177);">Settings</span>
<span class="t" style="left:538.70px;top:410.20px;font-size:9.00px;color:#ededed;transform:scaleX(0.8258);">Exit</span>
<span class="t" style="left:339.70px;top:446.60px;font-size:9.00px;color:#ededed;transform:scaleX(0.8397);">LIVE: 00:00:00</span>
<span class="t" style="left:412.50px;top:446.60px;font-size:9.00px;color:#ededed;transform:scaleX(0.8180);">REC: 00:00:00</span>
<span class="t" style="left:479.60px;top:446.60px;font-size:9.00px;color:#ededed;transform:scaleX(0.8331);">CPU: 0.4%, 60.00 fps</span>
</div>
</body></html>
